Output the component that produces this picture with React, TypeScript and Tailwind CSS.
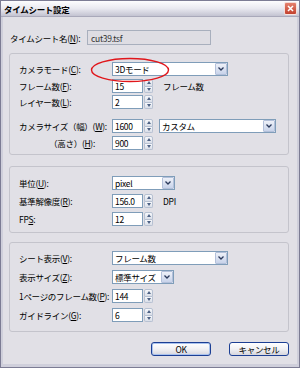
import type { ReactNode } from "react";

// small XP-ish dialog bits
function Spin() {
  return (
    <div className="flex flex-col w-[9px] h-[14px] ml-px">
      <div className="flex-1 flex items-center justify-center border border-[#b7c1d2] rounded-t-[2px] bg-gradient-to-b from-[#f7f8fb] to-[#d9dee8]">
        <div className="w-0 h-0 border-l-[2.5px] border-r-[2.5px] border-b-[3px] border-l-transparent border-r-transparent border-b-[#4d6185]" />
      </div>
      <div className="flex-1 flex items-center justify-center border border-t-0 border-[#b7c1d2] rounded-b-[2px] bg-gradient-to-b from-[#f7f8fb] to-[#d9dee8]">
        <div className="w-0 h-0 border-l-[2.5px] border-r-[2.5px] border-t-[3px] border-l-transparent border-r-transparent border-t-[#4d6185]" />
      </div>
    </div>
  );
}

function Num({ value }: { value: string }) {
  return (
    <div className="flex items-center">
      <div className="w-[31px] h-[14px] border border-[#7f9db9] bg-white px-[2px] flex items-center leading-[12px]">
        {value}
      </div>
      <Spin />
    </div>
  );
}

function Select({ value, w }: { value: string; w: string }) {
  return (
    <div className={`${w} h-[14px] border border-[#7f9db9] bg-white flex items-center`}>
      <div className="flex-1 px-[2px] leading-[12px] whitespace-nowrap">{value}</div>
      <div className="w-[12px] h-[12px] border border-[#b3c0da] rounded-[1px] bg-gradient-to-b from-[#eef1f8] to-[#c8d3ea] flex items-center justify-center">
        <svg width="6" height="4" viewBox="0 0 6 4">
          <path d="M0.5 0.5 L3 3 L5.5 0.5" fill="none" stroke="#2b3a5c" strokeWidth="1.3" />
        </svg>
      </div>
    </div>
  );
}

function Row({ label, children, right, className = "" }: { label: ReactNode; children: ReactNode; right?: boolean; className?: string }) {
  return (
    <div className={`flex items-center h-[14px] ${className}`}>
      <div className={`w-[93px] shrink-0 whitespace-nowrap leading-[12px] ${right ? "text-right pr-[17px]" : ""}`}>{label}</div>
      {children}
    </div>
  );
}

function Group({ children, className = "" }: { children: ReactNode; className?: string }) {
  return (
    <div className={`border border-[#c4c4cc] rounded-[3px] pl-[9px] ${className}`}>{children}</div>
  );
}

function Btn({ children, def }: { children: ReactNode; def?: boolean }) {
  return (
    <div
      className={`h-[14px] w-[60px] rounded-[3px] border flex items-center justify-center leading-[12px] bg-gradient-to-b from-white via-[#f1f1f4] to-[#d6d6de] ${
        def ? "border-[#1c3f94] shadow-[inset_0_0_0_1px_#a9c2ee]" : "border-[#1c3f94]"
      }`}
    >
      {children}
    </div>
  );
}

export default function App() {
  return (
    <div className="w-[300px] h-[368px] bg-[#7c7c94] p-px font-['Noto_Sans_CJK_JP',sans-serif] text-[8.5px] tracking-[-0.3px] text-black">
      <div className="h-full flex flex-col bg-[#cfcfdb] px-[2px] pb-[3px] relative">
        {/* title bar */}
        <div className="h-[16px] -mx-[2px] flex items-center justify-between pl-[3px] pr-[2px] bg-gradient-to-b from-[#fdfdfe] via-[#e9e9f0] to-[#c3c3d1] border-b border-[#a9a9ba]">
          <div className="font-bold text-[8.5px] leading-[12px]">タイムシート設定</div>
          <div className="w-[13px] h-[13px] rounded-[2px] border border-white/80 bg-gradient-to-b from-[#e4806c] to-[#c2402e] flex items-center justify-center">
            <svg width="7" height="7" viewBox="0 0 7 7">
              <path d="M1 1 L6 6 M6 1 L1 6" stroke="white" strokeWidth="1.5" />
            </svg>
          </div>
        </div>

        {/* body */}
        <div className="flex-1 bg-[#e1e0e6] pl-[6px] pr-[8px] pt-[13px] flex flex-col">
          <div className="flex items-center h-[15px]">
            <div className="w-[78px] pl-px leading-[12px] whitespace-nowrap">
              タイムシート名(<u>N</u>):
            </div>
            <div className="w-[124px] h-[15px] border border-[#a8afbd] bg-[#dedde3] px-[3px] flex items-center leading-[12px] text-[#333]">
              cut39.tsf
            </div>
          </div>

          <Group className="mt-[8px] pt-[8px] pb-[4px]">
            <Row label={<>カメラモード(<u>C</u>):</>}>
              <Select value="3Dモード" w="w-[116px]" />
            </Row>
            <Row label={<>フレーム数(<u>F</u>):</>} className="mt-[3px]">
              <Num value="15" />
              <div className="ml-[10px] leading-[12px]">フレーム数</div>
            </Row>
            <Row label={<>レイヤー数(<u>L</u>):</>} className="mt-[2px]">
              <Num value="2" />
            </Row>
            <Row label={<>カメラサイズ（幅）(<u>W</u>):</>} className="mt-[10px]">
              <Num value="1600" />
              <div className="ml-[6px]">
                <Select value="カスタム" w="w-[117px]" />
              </div>
            </Row>
            <Row label={<>（高さ）(<u>H</u>):</>} right className="mt-[3px]">
              <Num value="900" />
            </Row>
          </Group>

          <Group className="mt-[11px] pt-[9px] pb-[6px]">
            <Row label={<>単位(<u>U</u>):</>}>
              <Select value="pixel" w="w-[63px]" />
            </Row>
            <Row label={<>基準解像度(<u>R</u>):</>} className="mt-[4px]">
              <Num value="156.0" />
              <div className="ml-[10px] leading-[12px]">DPI</div>
            </Row>
            <Row label={<>FP<u>S</u>:</>} className="mt-[4px]">
              <Num value="12" />
            </Row>
          </Group>

          <Group className="mt-[9px] pt-[8px] pb-[9px]">
            <Row label={<>シート表示(<u>V</u>):</>}>
              <Select value="フレーム数" w="w-[116px]" />
            </Row>
            <Row label={<>表示サイズ(<u>Z</u>):</>} className="mt-[5px]">
              <Select value="標準サイズ" w="w-[62px]" />
            </Row>
            <Row label={<>1ページのフレーム数(<u>P</u>):</>} className="mt-[5px]">
              <Num value="144" />
            </Row>
            <Row label={<>ガイドライン(<u>G</u>):</>} className="mt-[5px]">
              <Num value="6" />
            </Row>
          </Group>

          <div className="flex justify-end gap-[18px] mt-[10px]">
            <Btn def>OK</Btn>
            <Btn>キャンセル</Btn>
          </div>
        </div>

        {/* red annotation ellipse */}
        <svg className="absolute left-[89px] top-[56px]" width="80" height="26" viewBox="0 0 80 26">
          <ellipse cx="40" cy="13" rx="38.5" ry="11.5" fill="none" stroke="#e0161b" strokeWidth="1.4" />
        </svg>
      </div>
    </div>
  );
}
